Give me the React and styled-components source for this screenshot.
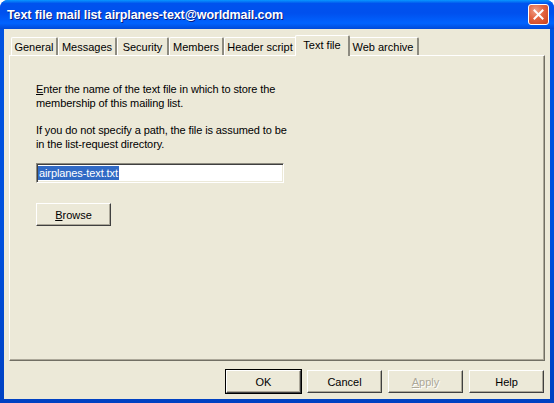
import styled, { createGlobalStyle } from "styled-components";

const GlobalStyle = createGlobalStyle`
  html, body {
    margin: 0;
    padding: 0;
    background: #ffffff;
  }
  body {
    font-family: "Liberation Sans", Arial, sans-serif;
    font-size: 11px;
    color: #000000;
  }
`;

const Window = styled.div`
  width: 554px;
  height: 403px;
  display: flex;
  flex-direction: column;
  background: linear-gradient(180deg, #0053e1 0%, #0050dd 60%, #0041c2 100%);
  border-radius: 8px 8px 0 0;
  overflow: hidden;
`;

const TitleBar = styled.div`
  height: 29px;
  flex: none;
  display: flex;
  align-items: center;
  justify-content: space-between;
  padding: 0 5px 0 7px;
  background: linear-gradient(
    180deg,
    #0997ff 0%,
    #0053ee 12%,
    #0050ee 45%,
    #0063ff 80%,
    #0049d8 100%
  );
`;

const Title = styled.span`
  color: #ffffff;
  font-family: "Liberation Sans", Arial, sans-serif;
  font-weight: bold;
  font-size: 12.5px;
  letter-spacing: -0.1px;
  text-shadow: 1px 1px 0 #0a1a7c;
  white-space: nowrap;
`;

const CloseButton = styled.div`
  width: 19px;
  height: 19px;
  border: 1px solid #ffffff;
  border-radius: 3px;
  background: radial-gradient(circle at 35% 30%, #f0a088 0%, #e3633f 45%, #c8401c 100%);
  display: flex;
  align-items: center;
  justify-content: center;
  margin-bottom: 1px;
`;

const Body = styled.div`
  flex: 1;
  margin: 0 4px 4px 4px;
  background: #ece9d8;
  display: flex;
  flex-direction: column;
  padding: 7px 5px 5px 5px;
`;

const TabStrip = styled.div`
  display: flex;
  align-items: flex-end;
  height: 20px;
  padding-left: 2px;
  position: relative;
  z-index: 1;
  margin-bottom: -1px;
`;

const Tab = styled.div`
  box-sizing: border-box;
  width: ${(p) => p.$w}px;
  height: ${(p) => (p.$active ? 21 : 18)}px;
  margin: ${(p) => (p.$active ? "0 -2px 0 -2px" : "0 0 1px 0")};
  display: flex;
  align-items: ${(p) => (p.$active ? "flex-start" : "center")};
  padding-top: ${(p) => (p.$active ? 3 : 0)}px;
  justify-content: center;
  background: #ece9d8;
  border-top: 1px solid #ffffff;
  border-left: 1px solid #ffffff;
  border-right: 2px solid #8d8b80;
  border-radius: 2px 2px 0 0;
  white-space: nowrap;
  position: relative;
  z-index: ${(p) => (p.$active ? 2 : 1)};
`;

const Panel = styled.div`
  height: 306px;
  box-sizing: border-box;
  border-top: 1px solid #ffffff;
  border-left: 1px solid #ffffff;
  border-right: 1px solid #716f64;
  border-bottom: 1px solid #716f64;
  box-shadow: inset -1px -1px 0 #aca899;
  padding: 26px 26px;
  display: flex;
  flex-direction: column;
  align-items: flex-start;
`;

const Para = styled.p`
  margin: 0 0 13px 0;
  line-height: 14px;
  letter-spacing: -0.1px;
  white-space: nowrap;

  &.mnemonic::first-letter {
    text-decoration: underline;
  }
`;

const Input = styled.div`
  box-sizing: border-box;
  width: 248px;
  height: 20px;
  margin-top: -1px;
  background: #ffffff;
  border-top: 1px solid #8d8b80;
  border-left: 1px solid #8d8b80;
  border-bottom: 1px solid #ffffff;
  border-right: 1px solid #ffffff;
  box-shadow: inset 1px 1px 0 #404040, inset -1px -1px 0 #ece9d8;
  padding: 2px 1px;
  display: flex;
  align-items: center;
`;

const Selected = styled.span`
  background: #316ac5;
  color: #ffffff;
  line-height: 14px;
  padding: 0 1px;
  letter-spacing: -0.1px;
`;

const Button = styled.div`
  box-sizing: border-box;
  width: 75px;
  height: 23px;
  display: flex;
  align-items: center;
  justify-content: center;
  background: #ece9d8;
  border-top: 1px solid #ffffff;
  border-left: 1px solid #ffffff;
  border-right: 1px solid #404040;
  border-bottom: 1px solid #404040;
  box-shadow: inset -1px -1px 0 #aca899;
  color: ${(p) => (p.$disabled ? "#aca899" : "#000000")};
  text-shadow: ${(p) => (p.$disabled ? "1px 1px 0 #ffffff" : "none")};
  outline: ${(p) => (p.$default ? "1px solid #000000" : "none")};
  outline-offset: 0;
`;

const BrowseButton = styled(Button)`
  margin-top: 20px;
`;

const Label = styled.span`
  display: inline-block;

  &.mnemonic::first-letter {
    text-decoration: underline;
  }
`;

const Footer = styled.div`
  display: flex;
  justify-content: flex-end;
  gap: 6px;
  margin-top: 9px;
  padding-right: 1px;
`;

const tabs = [
  { label: "General", w: 47 },
  { label: "Messages", w: 59 },
  { label: "Security", w: 52 },
  { label: "Members", w: 55 },
  { label: "Header script", w: 73 },
  { label: "Text file", w: 55, active: true },
  { label: "Web archive", w: 71 },
];

function App() {
  return (
    <>
      <GlobalStyle />
      <Window>
        <TitleBar>
          <Title>Text file mail list airplanes-text@worldmail.com</Title>
          <CloseButton>
            <svg width="11" height="11" viewBox="0 0 11 11">
              <path
                d="M1.5 1.5 L9.5 9.5 M9.5 1.5 L1.5 9.5"
                stroke="#ffffff"
                strokeWidth="2"
                strokeLinecap="square"
              />
            </svg>
          </CloseButton>
        </TitleBar>
        <Body>
          <TabStrip>
            {tabs.map((t) => (
              <Tab key={t.label} $w={t.w} $active={t.active}>
                {t.label}
              </Tab>
            ))}
          </TabStrip>
          <Panel>
            <Para className="mnemonic">
              Enter the name of the text file in which to store the
              <br />
              membership of this mailing list.
            </Para>
            <Para>
              If you do not specify a path, the file is assumed to be
              <br />
              in the list-request directory.
            </Para>
            <Input>
              <Selected>airplanes-text.txt</Selected>
            </Input>
            <BrowseButton>
              <Label className="mnemonic">Browse</Label>
            </BrowseButton>
          </Panel>
          <Footer>
            <Button $default>
              <Label>OK</Label>
            </Button>
            <Button>
              <Label>Cancel</Label>
            </Button>
            <Button $disabled>
              <Label className="mnemonic">Apply</Label>
            </Button>
            <Button>
              <Label>Help</Label>
            </Button>
          </Footer>
        </Body>
      </Window>
    </>
  );
}

export default App;
